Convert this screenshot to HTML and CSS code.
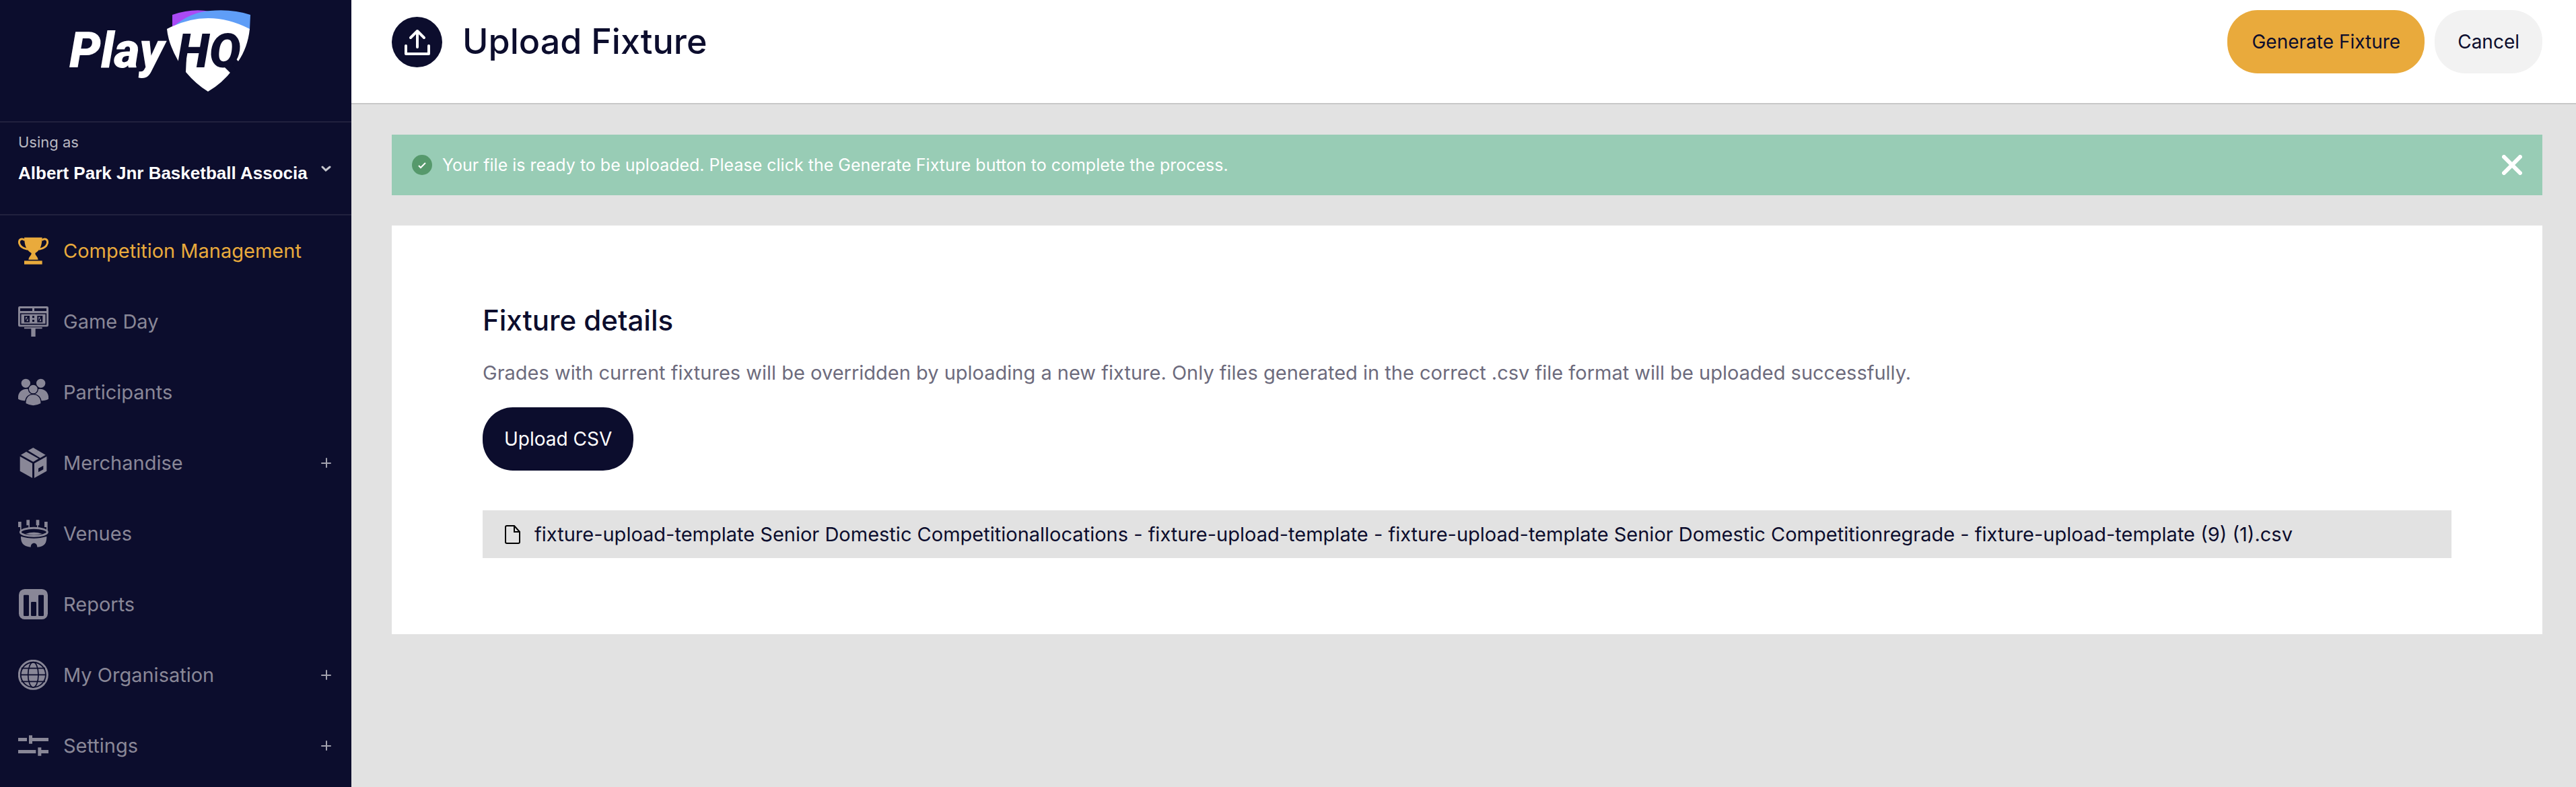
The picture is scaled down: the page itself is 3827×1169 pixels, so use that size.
FILE: index.html
```
<!DOCTYPE html>
<html lang="en">
<head>
    <meta charset="UTF-8">
    <title>Upload Fixture - PlayHQ</title>
    <link rel="stylesheet" href="styles.css">
</head>
<body>
    <aside class="sidebar">
        <a class="logo" href="#" aria-label="PlayHQ">
            <svg viewBox="0 0 290 140">
                <path fill="#aa4af5" d="M166 17Q195 7 222 12L182 34L166 35Z"/>
                <path fill="#5f9ef7" d="M167 35Q192 13 222 11Q255 8 282 17L281 39Q250 24 219 24Q190 24 167 35Z"/>
                <path fill="#fff" d="M158 38Q219 6 281 38C279 57 273 73 264 86L260 82L251 93L256 98Q240 119 219 131Q201 120 186 102L187 80L175 86Q160 60 158 38Z"/>
                <text class="logo-play" x="13" y="95">Play</text>
                <text class="logo-hq" x="173" y="95">HQ</text>
            </svg>
        </a>

        <div class="organisation">
            <label for="organisation">Using as</label>
            <div class="organisation-row">
                <select id="organisation">
                    <option>Albert Park Jnr Basketball Associa</option>
                </select>
                <svg class="chevron" viewBox="0 0 15 26"><path d="M2 11L7 16L13 11"/></svg>
            </div>
        </div>

        <nav class="menu">
            <a class="active" href="#">
                <svg class="menu-icon" viewBox="0 0 135 135">
                    <path d="M27 8H107C106 45 98 65 76 78C76 90 86 90 89 107H46C49 90 59 90 59 78C37 65 28 45 27 8Z"/>
                    <path d="M27 112h80v16H27z"/>
                    <path class="line" d="M29 20C15 10 1 17 5 35C9 49 24 58 42 61M106 20C120 10 134 17 130 35C126 49 111 58 93 61"/>
                </svg>
                <span>Competition Management</span>
            </a>
            <a href="#">
                <svg class="menu-icon" viewBox="0 0 135 135">
                    <rect width="135" height="91" rx="7"/>
                    <path class="cut" d="M9 9h54v12H9zM72 9h54v12H72zM27 42h24v29H27zM85 42h24v29H85zM63 43h9v9h-9zM63 60h9v9h-9z"/>
                    <path class="cut-line" d="M11 33h113v47H11z"/>
                    <path d="M33 47h11v19H33zM91 47h11v19H91z"/>
                    <path class="cut-line" d="M34 66L44 47M92 66L102 47"/>
                    <path d="M27 94h80v6H77v35H58v-35H27z"/>
                </svg>
                <span>Game Day</span>
            </a>
            <a href="#">
                <svg class="menu-icon" viewBox="0 0 135 135">
                    <ellipse cx="34" cy="28" rx="20" ry="20"/>
                    <ellipse cx="101" cy="28" rx="20" ry="20"/>
                    <path d="M0 98C-3 70 15 53 38 53C55 53 66 66 66 104Q20 110 0 98ZM135 98C138 70 120 53 97 53C80 53 69 66 69 104Q115 110 135 98Z"/>
                    <ellipse class="outlined" cx="67" cy="54" rx="21" ry="21"/>
                    <path class="outlined" d="M33 119C30 92 46 77 67 77S104 92 102 119Q67 138 33 119Z"/>
                </svg>
                <span>Participants</span>
            </a>
            <a href="#">
                <svg class="menu-icon" viewBox="0 0 135 135">
                    <path d="M12 32L36 18L91 49L67 63ZM44 13L67 0L122 32L98 46ZM8 39L63 70V135L8 104ZM72 70L127 39V104L72 135Z"/>
                    <path class="cut" d="M90 92L112 80V97L90 109Z"/>
                </svg>
                <span>Merchandise</span>
                <svg class="plus" viewBox="0 0 15 15"><path d="M1 8h13M8 1v13"/></svg>
            </a>
            <a href="#">
                <svg class="menu-icon" viewBox="0 0 135 135">
                    <path d="M0 15h14v40h-5V39H0zM37 7h14v40h-5V31h-9zM80 7h14v24h-5v16h-5V31h-4zM117 15h14v40h-5V39h-9z"/>
                    <ellipse class="line" cx="70" cy="61" rx="60" ry="18"/>
                    <path d="M34 68Q70 56 106 68Q70 80 34 68Z"/>
                    <path d="M12 80C50 92 90 92 127 80C127 108 120 126 85 128C85 104 56 104 56 128C20 124 12 108 12 80Z"/>
                </svg>
                <span>Venues</span>
            </a>
            <a href="#">
                <svg class="menu-icon" viewBox="0 0 135 135">
                    <rect x="3" width="129" height="135" rx="26"/>
                    <rect class="cut" x="24" y="26" width="24" height="94" rx="4"/>
                    <rect class="cut" x="57" y="57" width="24" height="63" rx="4"/>
                    <rect class="cut" x="90" y="26" width="24" height="94" rx="4"/>
                </svg>
                <span>Reports</span>
            </a>
            <a href="#">
                <svg class="menu-icon" viewBox="0 0 135 135">
                    <circle class="line" cx="67" cy="67" r="63"/>
                    <circle cx="67" cy="67" r="53"/>
                    <path class="cut-line" d="M14 38h106M10 67h114M14 97h106"/>
                    <ellipse class="cut-line" cx="67" cy="67" rx="23" ry="56"/>
                </svg>
                <span>My Organisation</span>
                <svg class="plus" viewBox="0 0 15 15"><path d="M1 8h13M8 1v13"/></svg>
            </a>
            <a href="#">
                <svg class="menu-icon" viewBox="0 0 135 135">
                    <path d="M0 33h39v15H0zM48 22h15v11h72v15H63v11H48zM0 87h79v15H0zM88 76h15v11h32v15h-32v11H88z"/>
                </svg>
                <span>Settings</span>
                <svg class="plus" viewBox="0 0 15 15"><path d="M1 8h13M8 1v13"/></svg>
            </a>
        </nav>
    </aside>

    <div class="content">
        <header class="page-header">
            <svg class="upload-icon" viewBox="0 0 75 75">
                <circle cx="37.5" cy="37.5" r="37.5"/>
                <path d="M38 45V21M28 31L38 21L48 31M21 43V55H55V43"/>
            </svg>
            <h1>Upload Fixture</h1>
            <button type="button" class="primary">Generate Fixture</button>
            <button type="button" class="cancel">Cancel</button>
        </header>

        <main>
            <div class="alert" role="status">
                <svg class="alert-icon" viewBox="0 0 30 30">
                    <circle cx="15" cy="15" r="15"/>
                    <path d="M10 16L13 19L20 12"/>
                </svg>
                <p>Your file is ready to be uploaded. Please click the Generate Fixture button to complete the process.</p>
                <button type="button" class="close" aria-label="Close">
                    <svg viewBox="0 0 30 30"><path d="M3 3L27 27M27 3L3 27"/></svg>
                </button>
            </div>

            <section class="card">
                <h2>Fixture details</h2>
                <p>Grades with current fixtures will be overridden by uploading a new fixture. Only files generated in the correct .csv file format will be uploaded successfully.</p>
                <button type="button" class="upload">Upload CSV</button>
                <div class="file">
                    <svg viewBox="0 0 24 28"><path d="M3 1H14L22 10V25Q22 27 20 27H3Q1 27 1 25V3Q1 1 3 1ZM14 1V10H22"/></svg>
                    <span>fixture-upload-template Senior Domestic Competitionallocations - fixture-upload-template - fixture-upload-template Senior Domestic Competitionregrade - fixture-upload-template (9) (1).csv</span>
                </div>
            </section>
        </main>
    </div>
</body>
</html>
```
FILE: styles.css
```
* {
    box-sizing: border-box;
}

body {
    display: flex;
    min-height: 100vh;
    margin: 0;
    background-color: #e2e2e2;
    color: #0c0d2d;
    font-family: Inter, "Liberation Sans", sans-serif;
    font-size: 29px;
}

h1, h2, p {
    margin: 0;
    font-weight: 400;
}

svg {
    display: block;
    flex-shrink: 0;
}

button {
    height: 94px;
    padding: 0 34px;
    border: none;
    border-radius: 45px;
    color: #0c0d2d;
    font-family: inherit;
    font-size: 28px;
    cursor: pointer;
}

/* Sidebar */
.sidebar {
    flex: 0 0 522px;
    background-color: #0c0d2d;
}

.logo {
    display: block;
    padding: 5px 0 35px 90px;
}

.logo svg {
    width: 290px;
    height: 140px;
}

.logo-play, .logo-hq {
    font-family: Roboto, sans-serif;
    font-style: italic;
    font-weight: 900;
}

.logo-play {
    fill: #fff;
    font-size: 74px;
}

.logo-hq {
    fill: #0c0d2d;
    font-size: 70px;
}

.organisation {
    height: 140px;
    padding: 11px 30px 0 27px;
    border-top: 2px solid #21213e;
    border-bottom: 2px solid #21213e;
}

.organisation label {
    display: block;
    color: #b9b9c2;
    font-size: 22px;
    line-height: 36px;
}

.organisation-row {
    display: flex;
    justify-content: space-between;
    margin-top: 8px;
}

.organisation select {
    appearance: none;
    height: 40px;
    padding: 0;
    border: none;
    background: none;
    color: #fff;
    font-family: "Liberation Sans", sans-serif;
    font-size: 26px;
    font-weight: bold;
}

.chevron {
    width: 15px;
    height: 26px;
    fill: none;
    stroke: #c6c6cd;
    stroke-width: 3;
    stroke-linecap: round;
}

.menu a {
    display: flex;
    align-items: center;
    gap: 22px;
    height: 105px;
    padding: 0 30px 0 27px;
    color: #898797;
    text-decoration: none;
}

.menu .active {
    color: #e9aa3c;
}

.menu-icon {
    width: 45px;
    height: 45px;
    fill: currentColor;
}

.menu-icon .line {
    fill: none;
    stroke: currentColor;
    stroke-width: 9;
}

.menu-icon .cut {
    fill: #0c0d2d;
}

.menu-icon .cut-line {
    fill: none;
    stroke: #0c0d2d;
    stroke-width: 5;
}

.menu-icon .outlined {
    stroke: #0c0d2d;
    stroke-width: 4;
}

.plus {
    width: 15px;
    height: 15px;
    margin-left: auto;
    stroke: #a3a2ae;
    stroke-width: 2;
    stroke-linecap: round;
}

/* Page */
.content {
    flex: 1;
    min-width: 0;
}

.page-header {
    display: flex;
    align-items: center;
    padding: 15px 50px 44px 60px;
    border-bottom: 2px solid #c8c8c8;
    background-color: #fff;
}

.page-header h1 {
    flex: 1;
    margin-left: 30px;
    font-size: 52px;
    font-weight: 500;
    line-height: 60px;
}

.upload-icon {
    width: 75px;
    height: 75px;
    fill: #0c0d2d;
}

.upload-icon path {
    fill: none;
    stroke: #fff;
    stroke-width: 4;
    stroke-linecap: round;
    stroke-linejoin: round;
}

.primary {
    padding: 0 36px;
    background-color: #e9aa3c;
}

.cancel {
    margin-left: 15px;
    background-color: #f2f2f2;
}

main {
    padding: 45px 50px 45px 60px;
}

.alert {
    display: flex;
    align-items: center;
    gap: 15px;
    min-height: 90px;
    padding: 0 30px;
    background-color: #98ccb5;
    color: #fff;
    font-size: 25px;
}

.alert p {
    flex: 1;
}

.alert-icon {
    width: 30px;
    height: 30px;
    fill: #56996c;
}

.alert-icon path {
    fill: none;
    stroke: #fff;
    stroke-width: 2;
}

.close {
    width: 30px;
    height: 30px;
    padding: 0;
    background: none;
}

.close svg {
    stroke: #fff;
    stroke-width: 6;
    stroke-linecap: round;
}

.card {
    margin-top: 45px;
    padding: 111px 135px 113px;
    background-color: #fff;
}

.card h2 {
    font-size: 42px;
    font-weight: 500;
    line-height: 60px;
}

.card p {
    margin-top: 26px;
    color: #6d6b7d;
    line-height: 44px;
}

.upload {
    margin-top: 29px;
    padding: 0 32px;
    background-color: #0c0d2d;
    color: #fff;
}

.file {
    display: flex;
    align-items: center;
    gap: 20px;
    min-height: 71px;
    margin-top: 59px;
    padding: 0 33px;
    background-color: #e2e2e2;
}

.file svg {
    width: 24px;
    height: 28px;
    fill: none;
    stroke: #000;
    stroke-width: 2;
}
```
